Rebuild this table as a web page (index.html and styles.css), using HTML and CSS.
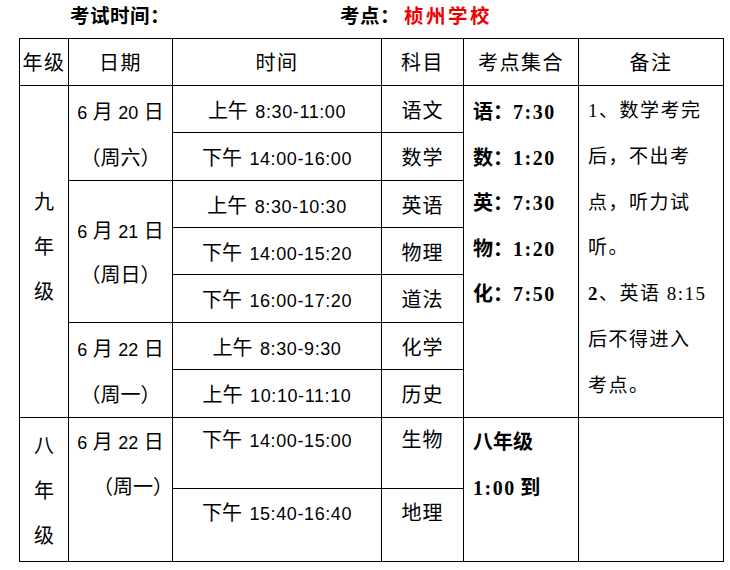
FILE: index.html
```html
<!DOCTYPE html>
<html lang="zh">
<head>
<meta charset="utf-8">
<link rel="stylesheet" href="styles.css">
</head>
<body>
<div class="title">
  <span class="t-time">考试时间：</span>
  <span class="t-place">考点：<span class="red">桢州学校</span></span>
</div>
<table class="sched">
  <colgroup>
    <col class="c1"><col class="c2"><col class="c3"><col class="c4"><col class="c5"><col class="c6">
  </colgroup>
  <tr class="h">
    <th>年级</th><th>日期</th><th>时间</th><th>科目</th><th>考点集合</th><th>备注</th>
  </tr>
  <tr class="r47">
    <td rowspan="7" class="grade g9">九<br>年<br>级</td>
    <td rowspan="2" class="date top"><span class="n">6</span> 月 <span class="n">20</span> 日<br>（周六）</td>
    <td class="time">上午 <span class="n">8:30-11:00</span></td>
    <td class="subj">语文</td>
    <td rowspan="7" class="gather">语：<span class="b">7:30</span><br>数：<span class="b">1:20</span><br>英：<span class="b">7:30</span><br>物：<span class="b">1:20</span><br>化：<span class="b">7:50</span></td>
    <td rowspan="7" class="note">1、数学考完<br>后，不出考<br>点，听力试<br>听。<br><span class="nb">2</span>、英语 8:15<br>后不得进入<br>考点。</td>
  </tr>
  <tr class="r48">
    <td class="time">下午 <span class="n">14:00-16:00</span></td>
    <td class="subj">数学</td>
  </tr>
  <tr class="r47">
    <td rowspan="3" class="date mid"><span class="n">6</span> 月 <span class="n">21</span> 日<br>（周日）</td>
    <td class="time">上午 <span class="n">8:30-10:30</span></td>
    <td class="subj">英语</td>
  </tr>
  <tr class="r47">
    <td class="time">下午 <span class="n">14:00-15:20</span></td>
    <td class="subj">物理</td>
  </tr>
  <tr class="r48">
    <td class="time">下午 <span class="n">16:00-17:20</span></td>
    <td class="subj">道法</td>
  </tr>
  <tr class="r47">
    <td rowspan="2" class="date top"><span class="n">6</span> 月 <span class="n">22</span> 日<br>（周一）</td>
    <td class="time">上午 <span class="n">8:30-9:30</span></td>
    <td class="subj">化学</td>
  </tr>
  <tr class="r48">
    <td class="time">上午 <span class="n">10:10-11:10</span></td>
    <td class="subj">历史</td>
  </tr>
  <tr class="r71">
    <td rowspan="2" class="grade">八<br>年<br>级</td>
    <td rowspan="2" class="date top8"><span class="n">6</span> 月 <span class="n">22</span> 日<br><span class="shift">（周一）</span></td>
    <td class="time t8">下午 <span class="n">14:00-15:00</span></td>
    <td class="subj t8">生物</td>
    <td rowspan="2" class="gather g8">八年级<br><span class="b">1:00</span> 到</td>
    <td rowspan="2" class="note"></td>
  </tr>
  <tr class="r73">
    <td class="time t9">下午 <span class="n">15:40-16:40</span></td>
    <td class="subj t9">地理</td>
  </tr>
</table>
</body>
</html>
```

FILE: styles.css
```css
html, body {
  margin: 0;
  padding: 0;
  background: #fff;
}
body {
  width: 730px;
  height: 570px;
  overflow: hidden;
  font-family: "Noto Sans CJK SC", sans-serif;
  color: #000;
}
.title {
  height: 30px;
  line-height: 30px;
  margin-bottom: 8px;
  padding-left: 70px;
  display: flex;
  font-weight: 700;
  font-size: 19.5px;
  letter-spacing: 0.5px;
}
.t-time {
  width: 270px;
}
.red {
  color: #ee0000;
  letter-spacing: 2.5px;
  margin-left: 4px;
}
.sched {
  margin-left: 19px;
  border-collapse: collapse;
  table-layout: fixed;
  width: 704px;
  font-size: 20px;
}
.c1 { width: 49px; }
.c2 { width: 104px; }
.c3 { width: 209px; }
.c4 { width: 82px; }
.c5 { width: 115px; }
.c6 { width: 145px; }
.sched th, .sched td {
  border: 1px solid #000;
  padding: 0;
  font-weight: 400;
  white-space: nowrap;
  vertical-align: top;
  text-align: center;
}
.sched tr.h { height: 47px; }
.sched tr.r47 { height: 47px; }
.sched tr.r48 { height: 48px; }
.sched tr.r71 { height: 71px; }
.sched tr.r73 { height: 73px; }
.sched th {
  vertical-align: middle;
  letter-spacing: 1.5px;
  line-height: 40px;
}
.n {
  font-family: "Liberation Sans", sans-serif;
  font-size: 18px;
  line-height: 1;
}
.sched td.time .n {
  letter-spacing: 0.6px;
}
.sched td.time, .sched td.subj {
  line-height: 40px;
  padding-top: 4px;
}
.sched td.time { word-spacing: 3px; }
.sched td.subj { letter-spacing: 1px; }
.sched td.t8 { padding-top: 1px; }
.sched td.t9 { padding-top: 3px; }
.sched td.grade {
  vertical-align: middle;
  line-height: 45px;
}
.sched td.g9 { padding-bottom: 12px; }
.sched td.date {
  line-height: 46px;
  word-spacing: 1px;
}
.sched td.date.top { padding-top: 2px; }
.sched td.date.mid {
  vertical-align: middle;
  line-height: 44px;
}
.sched td.date.top8 {
  line-height: 45px;
}
.shift {
  display: inline-block;
  padding-left: 24px;
}
.sched td.gather {
  text-align: left;
  padding-left: 9px;
  padding-top: 2px;
  line-height: 45.5px;
  font-weight: 700;
}
.sched td.gather.g8 { padding-top: 0; line-height: 46px; }
.b {
  font-family: "Liberation Serif", serif;
  font-weight: 700;
  letter-spacing: 1.5px;
  line-height: 1;
}
.sched td.note {
  text-align: left;
  padding-left: 9px;
  padding-top: 2px;
  line-height: 45.8px;
  font-family: "Liberation Serif", "Noto Sans CJK SC", serif;
  font-size: 19px;
  letter-spacing: 1.5px;
}
.nb { font-weight: 700; }
```
